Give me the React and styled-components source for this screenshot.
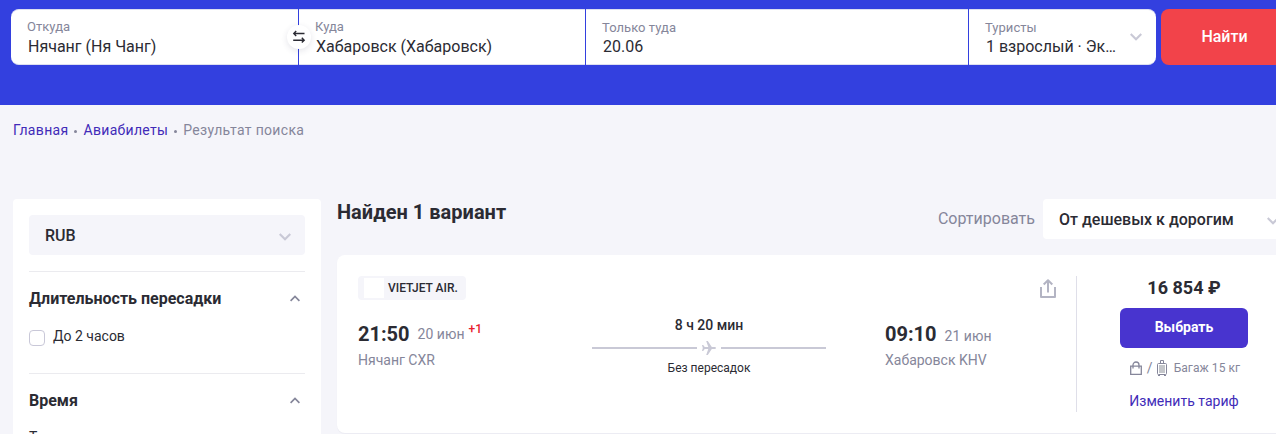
import React from 'react';
import styled, { createGlobalStyle } from 'styled-components';

const GlobalStyle = createGlobalStyle`
  *, *::before, *::after { box-sizing: border-box; }
  html, body { margin: 0; overflow: hidden; }
  body { background: #f5f5fa; color: #2b2b33; font-family: Roboto, "Liberation Sans", sans-serif; }
`;

const Page = styled.div`
  width: 100%;
  height: 434px;
  overflow: hidden;
  background: #f5f5fa;
`;

const Header = styled.header`
  height: 105px;
  padding: 9px 0 0 11px;
  background: #3340df;
`;

const SearchForm = styled.form`
  display: flex;
  width: 1277px;
  height: 56px;
`;

const Fields = styled.div`
  display: flex;
  gap: 1px;
  margin-right: 5px;
`;

const Field = styled.div`
  position: relative;
  width: ${(p) => p.$width}px;
  padding: ${(p) => p.$top || 10}px 0 0 16px;
  background: #fff;
  border: 1px solid #dddff0;
  border-width: 1px 0;
  &:first-child { border-radius: 8px 0 0 8px; }
  &:last-child { border-radius: 0 8px 8px 0; }
`;

const FieldLabel = styled.div`
  height: 16px;
  font-size: 13px;
  line-height: 16px;
  letter-spacing: 0.04px;
  color: #85869a;
`;

const FieldValue = styled.div`
  padding-left: 1px;
  margin-top: ${(p) => p.$top || 0}px;
  font-size: 16px;
  line-height: 22px;
  white-space: nowrap;
`;

const FieldArrow = styled.div`
  position: absolute;
  display: flex;
  top: 23px;
  right: 14px;
`;

const SwapButton = styled.button`
  position: absolute;
  z-index: 1;
  top: 15px;
  right: -13px;
  display: flex;
  align-items: center;
  justify-content: center;
  width: 24px;
  height: 24px;
  padding: 0;
  border: 0;
  border-radius: 50%;
  background: #fff;
  box-shadow: 0 2px 6px rgba(40, 40, 80, 0.12);
`;

const FindButton = styled.button`
  width: 127px;
  padding: 0;
  border: 0;
  border-radius: 8px;
  background: #f2434a;
  color: #fff;
  font: 500 16px/22px Roboto, sans-serif;
`;

const Breadcrumbs = styled.nav`
  display: flex;
  align-items: center;
  height: 20px;
  margin: 15px 0 59px 13px;
  font-size: 14px;
  line-height: 20px;
  letter-spacing: 0.32px;
  color: #85869a;
`;

const Crumb = styled.a`
  color: #412bb8;
`;

const Dot = styled.span`
  width: 3px;
  height: 3px;
  margin: 3px 6px 0;
  border-radius: 50%;
  background: #85869a;
`;

const Content = styled.main`
  display: flex;
  align-items: flex-start;
  gap: 16px;
  width: 1312px;
  padding-left: 13px;
`;

const Sidebar = styled.aside`
  flex: none;
  width: 308px;
  height: 260px;
  padding: 16px;
  border-radius: 4px;
  background: #fff;
`;

const CurrencySelect = styled.div`
  display: flex;
  align-items: center;
  justify-content: space-between;
  height: 40px;
  margin-bottom: 16px;
  padding: 0 14px 0 16px;
  border-radius: 4px;
  background: #f5f5fa;
  font-size: 16px;
  font-weight: 500;
  svg { margin-top: 4px; }
`;

const FilterGroup = styled.section`
  height: 102px;
  padding-top: 15px;
  border-top: 1px solid #ebebef;
`;

const FilterTitle = styled.h3`
  display: flex;
  align-items: center;
  justify-content: space-between;
  height: 24px;
  margin: 0;
  padding-right: 5px;
  font-size: 16px;
  font-weight: 700;
  line-height: 24px;
  svg { margin-bottom: 1px; }
`;

const FilterOption = styled.label`
  display: flex;
  gap: 8px;
  margin-top: 15px;
  font-size: 14px;
  line-height: 20px;
`;

const CheckBox = styled.span`
  width: 16px;
  height: 16px;
  margin-top: 4px;
  border: 1px solid #c9c8d8;
  border-radius: 4px;
`;

const FilterSubtitle = styled.div`
  margin-top: 14px;
  font-size: 14px;
  line-height: 20px;
`;

const Results = styled.div`
  flex: 1;
`;

const ResultsBar = styled.div`
  display: flex;
  height: 56px;
`;

const ResultsTitle = styled.h2`
  flex: 1;
  margin: 0;
  font-size: 20px;
  font-weight: 700;
  line-height: 26px;
`;

const SortLabel = styled.span`
  padding-right: 8px;
  font-size: 16px;
  line-height: 39px;
  color: #85869a;
`;

const SortSelect = styled.div`
  display: flex;
  align-items: center;
  gap: 33px;
  width: 269px;
  height: 40px;
  padding-left: 16px;
  border-radius: 4px 0 0 4px;
  background: #fff;
  font-size: 16px;
  font-weight: 500;
  svg { margin-top: 4px; }
`;

const Ticket = styled.article`
  display: flex;
  height: 178px;
  padding: 21px 0;
  border-radius: 8px;
  background: #fff;
  box-shadow: 0 1px 1px rgba(50, 50, 90, 0.05);
`;

const Flight = styled.div`
  width: 740px;
  padding: 0 19px 0 21px;
  border-right: 1px solid #dfdfe9;
`;

const FlightHead = styled.div`
  display: flex;
  align-items: flex-start;
  justify-content: space-between;
  height: 45px;
  svg { margin-top: 2px; }
`;

const Airline = styled.div`
  display: flex;
  align-items: center;
  gap: 4px;
  width: 108px;
  height: 24px;
  padding-left: 6px;
  border-radius: 4px;
  background: #f5f5fa;
  font-size: 12px;
  font-weight: 500;
  white-space: nowrap;
`;

const AirlineLogo = styled.span`
  width: 20px;
  height: 20px;
  background: #fff;
`;

const Route = styled.div`
  display: flex;
`;

const Point = styled.div`
  width: ${(p) => p.$width}px;
  flex: none;
`;

const TimeRow = styled.div`
  display: flex;
  align-items: flex-start;
  height: 27px;
`;

const Time = styled.span`
  margin-right: 8px;
  font-size: 20px;
  font-weight: 700;
  line-height: 27px;
`;

const Day = styled.span`
  font-size: 14px;
  line-height: ${(p) => (p.$low ? 31 : 27)}px;
  letter-spacing: 0.03px;
  color: #85869a;
`;

const DayShift = styled.span`
  margin-left: 4px;
  font-size: 12px;
  font-weight: 500;
  line-height: 16px;
  color: #e8202c;
`;

const Place = styled.div`
  margin-top: 2px;
  font-size: 14px;
  line-height: 20px;
  color: #85869a;
`;

const Path = styled.div`
  display: flex;
  flex-direction: column;
  align-items: center;
  width: 234px;
  margin-right: 59px;
`;

const Duration = styled.div`
  margin-top: -6px;
  font-size: 14px;
  font-weight: 500;
  line-height: 20px;
`;

const PathLine = styled.div`
  display: flex;
  align-items: center;
  gap: 5px;
  width: 100%;
  height: 14px;
  margin-top: 6px;
  &::before, &::after {
    content: "";
    flex: 1;
    height: 2px;
    background: #c9c9d6;
  }
`;

const Stops = styled.div`
  margin-top: 5px;
  font-size: 12px;
  line-height: 16px;
`;

const Offer = styled.div`
  display: flex;
  flex-direction: column;
  align-items: center;
  width: 214px;
`;

const Price = styled.div`
  height: 32px;
  font-size: 18px;
  font-weight: 700;
  line-height: 24px;
`;

const SelectButton = styled.button`
  width: 128px;
  height: 40px;
  padding: 0 0 2px;
  border: 0;
  border-radius: 6px;
  background: #4834cf;
  color: #fff;
  font: 700 14px/20px Roboto, sans-serif;
`;

const Baggage = styled.div`
  display: flex;
  align-items: center;
  height: 16px;
  margin: 12px 0 15px;
  padding-left: 2px;
  font-size: 12px;
  color: #85869a;
`;

const Slash = styled.span`
  margin: 0 4px 0 5px;
  font-size: 14px;
`;

const BaggageText = styled.span`
  margin-left: 7px;
  letter-spacing: 0.06px;
`;

const TariffLink = styled.a`
  font-size: 14px;
  line-height: 20px;
  letter-spacing: 0.02px;
  color: #412bb8;
`;

const ChevronDown = () => (
  <svg width="12" height="8" viewBox="0 0 12 8" fill="none" stroke="#c9c9d6" strokeWidth="2.2">
    <path d="M.7 1 6 6.3 11.3 1" />
  </svg>
);

const ChevronUp = () => (
  <svg width="10" height="7" viewBox="0 0 10 7" fill="none" stroke="#85869a" strokeWidth="1.7">
    <path d="M.6 5.8 5 1.4l4.4 4.4" />
  </svg>
);

const SwapIcon = () => (
  <svg width="14" height="14" viewBox="0 0 14 14" fill="none" stroke="#2b2b33" strokeWidth="1.4">
    <path d="M12.5 3.5H2M4.2 1.1 1.8 3.5l2.4 2.4M1.2 10.2h10.6M9.8 7.8l2.4 2.4-2.4 2.4" />
  </svg>
);

const ShareIcon = () => (
  <svg width="18" height="20" viewBox="0 0 18 20" fill="none" stroke="#b3b4c3" strokeWidth="2">
    <path d="M2 9v10h14V9M9 14.5V2.5M4.7 6.5 9 2.2l4.3 4.3" strokeLinejoin="round" />
  </svg>
);

const PlaneIcon = () => (
  <svg width="14" height="14" viewBox="0 0 14 14" fill="#c9c9d6">
    <path d="M0 4h1.2l1.5 2.1h3.6L4.2 0h1.6l4 6.1H13a.9.9 0 0 1 0 1.8H9.8l-4 6.1H4.2l2.1-6.1H2.7L1.2 10H0l.8-3z" />
  </svg>
);

const BagIcon = () => (
  <svg width="12" height="14" viewBox="0 0 12 14" fill="none" stroke="#85869a" strokeWidth="1.3">
    <path d="M.7 5.2h10.6v8.1H.7zM3 7.5V4a3 3 0 0 1 6 0v3.5" />
  </svg>
);

const SuitcaseIcon = () => (
  <svg width="10" height="16" viewBox="0 0 10 16" fill="none" stroke="#85869a">
    <path d="M3.5 3V.5h3V3" />
    <rect x=".5" y="3.5" width="9" height="11" rx="1" />
    <path d="M2 5h6v8H2z" fill="#c4c6ca" stroke="none" />
    <path d="M1 15.5h2M7 15.5h2" />
  </svg>
);

export default function App() {
  return (
    <Page>
      <GlobalStyle />
      <Header>
        <SearchForm>
          <Fields>
            <Field $width={287} $top={9}>
              <FieldLabel>Откуда</FieldLabel>
              <FieldValue $top={1}>Нячанг (Ня Чанг)</FieldValue>
              <SwapButton type="button" aria-label="Поменять местами"><SwapIcon /></SwapButton>
            </Field>
            <Field $width={286} $top={9}>
              <FieldLabel>Куда</FieldLabel>
              <FieldValue $top={1}>Хабаровск (Хабаровск)</FieldValue>
            </Field>
            <Field $width={382}>
              <FieldLabel>Только туда</FieldLabel>
              <FieldValue>20.06</FieldValue>
            </Field>
            <Field $width={187}>
              <FieldLabel>Туристы</FieldLabel>
              <FieldValue>1 взрослый · Эк…</FieldValue>
              <FieldArrow><ChevronDown /></FieldArrow>
            </Field>
          </Fields>
          <FindButton type="button">Найти</FindButton>
        </SearchForm>
      </Header>
      <Breadcrumbs>
        <Crumb>Главная</Crumb>
        <Dot />
        <Crumb>Авиабилеты</Crumb>
        <Dot />
        <span>Результат поиска</span>
      </Breadcrumbs>
      <Content>
        <Sidebar>
          <CurrencySelect>RUB<ChevronDown /></CurrencySelect>
          <FilterGroup>
            <FilterTitle>Длительность пересадки<ChevronUp /></FilterTitle>
            <FilterOption><CheckBox />До 2 часов</FilterOption>
          </FilterGroup>
          <FilterGroup>
            <FilterTitle>Время<ChevronUp /></FilterTitle>
            <FilterSubtitle>Туда</FilterSubtitle>
          </FilterGroup>
        </Sidebar>
        <Results>
          <ResultsBar>
            <ResultsTitle>Найден 1 вариант</ResultsTitle>
            <SortLabel>Сортировать</SortLabel>
            <SortSelect>От дешевых к дорогим<ChevronDown /></SortSelect>
          </ResultsBar>
          <Ticket>
            <Flight>
              <FlightHead>
                <Airline><AirlineLogo />VIETJET AIR.</Airline>
                <ShareIcon />
              </FlightHead>
              <Route>
                <Point $width={234}>
                  <TimeRow>
                    <Time>21:50</Time>
                    <Day>20 июн</Day>
                    <DayShift>+1</DayShift>
                  </TimeRow>
                  <Place>Нячанг CXR</Place>
                </Point>
                <Path>
                  <Duration>8 ч 20 мин</Duration>
                  <PathLine><PlaneIcon /></PathLine>
                  <Stops>Без пересадок</Stops>
                </Path>
                <Point $width={150}>
                  <TimeRow>
                    <Time>09:10</Time>
                    <Day $low>21 июн</Day>
                  </TimeRow>
                  <Place>Хабаровск KHV</Place>
                </Point>
              </Route>
            </Flight>
            <Offer>
              <Price>16 854 ₽</Price>
              <SelectButton type="button">Выбрать</SelectButton>
              <Baggage>
                <BagIcon />
                <Slash>/</Slash>
                <SuitcaseIcon />
                <BaggageText>Багаж 15 кг</BaggageText>
              </Baggage>
              <TariffLink>Изменить тариф</TariffLink>
            </Offer>
          </Ticket>
        </Results>
      </Content>
    </Page>
  );
}
